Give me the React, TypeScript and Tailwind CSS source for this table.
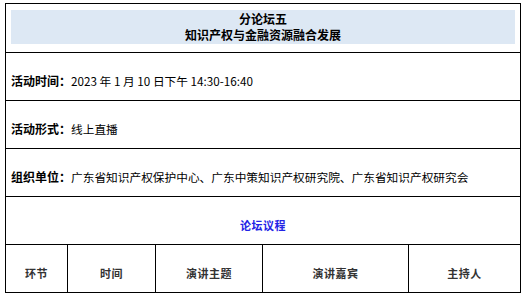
import React from "react";

const font = { fontFamily: '"Noto Sans CJK SC", "Liberation Sans", sans-serif' };

function InfoRow({ label, value }: { label: string; value: string }) {
  return (
    <div className="h-[48px] border-t border-black flex items-center pt-[9px] pl-[5px] leading-[16px] text-black whitespace-nowrap">
      <span className="font-bold text-[12px]">{label}</span>
      <span className="text-[11.7px]">{value}</span>
    </div>
  );
}

export default function App() {
  const cols = [
    { label: "环节", w: "w-[62px]" },
    { label: "时间", w: "w-[88px]" },
    { label: "演讲主题", w: "w-[107px]" },
    { label: "演讲嘉宾", w: "w-[146px]" },
    { label: "主持人", w: "flex-1" },
  ];
  return (
    <div className="w-[526px] h-[301px] bg-white pt-[3px] pl-[5px]" style={font}>
      <div className="w-[516px] border border-black flex flex-col">
        <div className="h-[48px] pt-[6px] px-[5px]">
          <div className="h-[34px] bg-[#dde8f4] flex flex-col items-center justify-center text-[12px] leading-[16px] font-bold text-black">
            <div>分论坛五</div>
            <div>知识产权与金融资源融合发展</div>
          </div>
        </div>
        <InfoRow label="活动时间：" value="2023 年 1 月 10 日下午 14:30-16:40" />
        <InfoRow label="活动形式：" value="线上直播" />
        <InfoRow label="组织单位：" value="广东省知识产权保护中心、广东中策知识产权研究院、广东省知识产权研究会" />
        <div className="h-[48px] border-t border-black flex items-center justify-center pt-[9px] text-[11px] leading-[16px] font-semibold tracking-[0.5px] text-[#2323e6]">
          论坛议程
        </div>
        <div className="h-[48px] border-t border-black flex">
          {cols.map((c, i) => (
            <div
              key={c.label}
              className={`${c.w} ${i < cols.length - 1 ? "border-r border-black" : ""} flex items-center justify-center pt-[9px] text-[11px] leading-[16px] font-semibold tracking-[0.5px] text-[#333333]`}
            >
              {c.label}
            </div>
          ))}
        </div>
      </div>
    </div>
  );
}
